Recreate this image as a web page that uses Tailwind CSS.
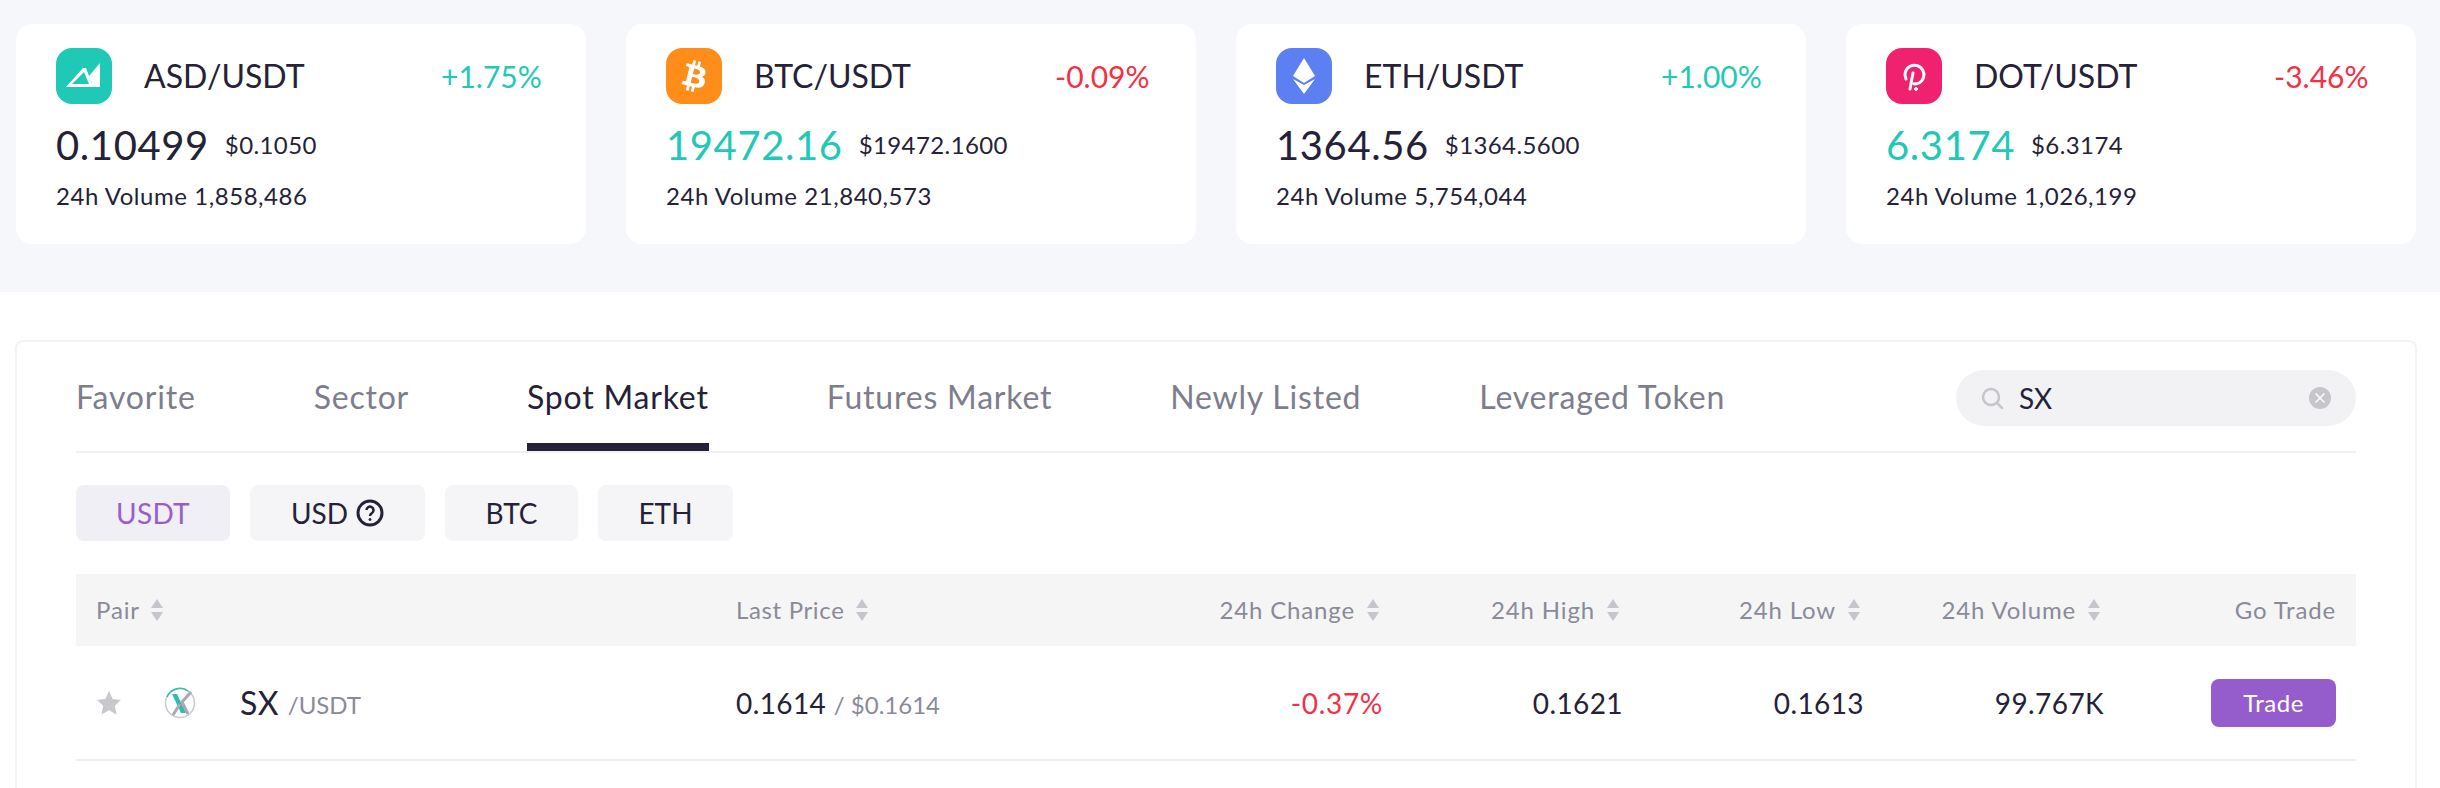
<!DOCTYPE html>
<html lang="en">
<head>
  <meta charset="UTF-8">
  <title>Markets</title>
  <script src="https://cdn.jsdelivr.net/npm/@tailwindcss/browser@4"></script>
</head>
<body class="bg-white text-[#252238] font-[Lato,'Noto_Sans',sans-serif] overflow-hidden h-[788px]">
  <!-- top pairs -->
  <div class="bg-[#f6f7fb] h-[292px] pt-6 pl-4 flex gap-10">
    <div class="w-[570px] h-[220px] bg-white rounded-2xl pt-6 pl-10">
      <div class="flex items-center h-14">
        <div class="w-14 h-14 rounded-2xl bg-[#1fc9b5]">
          <svg viewBox="0 0 56 56" class="w-14 h-14" fill="#fff"><path d="M10 39h34v-3H16l12-12 5 12h3l-6-16h-3z"/><path d="M33 28 44 15v21h-8z"/></svg>
        </div>
        <div class="ml-8 w-[297px] text-[32px]">ASD/USDT</div>
        <div class="text-[30px] text-[#1fc9b5]">+1.75%</div>
      </div>
      <div class="flex items-center mt-[17px] h-12">
        <span class="text-[40px] tracking-[0.6px]">0.10499</span>
        <span class="ml-4 text-[24px] tracking-[0.4px]">$0.1050</span>
      </div>
      <div class="mt-[9px] text-[24px] tracking-[0.55px]">24h Volume 1,858,486</div>
    </div>

    <div class="w-[570px] h-[220px] bg-white rounded-2xl pt-6 pl-10">
      <div class="flex items-center h-14">
        <div class="w-14 h-14 rounded-2xl bg-[#ff8d1a]">
          <svg viewBox="-1.5 -1.5 35 35" class="w-14 h-14" fill="#fff"><path d="M23.189 14.02c.314-2.096-1.283-3.223-3.465-3.975l.708-2.84-1.728-.43-.69 2.765c-.454-.114-.92-.22-1.385-.326l.695-2.783L15.596 6l-.708 2.839c-.376-.086-.746-.17-1.104-.26l.002-.009-2.384-.595-.46 1.846s1.283.294 1.256.312c.7.175.826.638.805 1.006l-.806 3.235c.048.012.11.03.18.057l-.183-.045-1.13 4.532c-.086.212-.303.531-.793.41.018.025-1.256-.313-1.256-.313l-.858 1.978 2.25.561c.418.105.828.215 1.231.318l-.715 2.872 1.727.43.708-2.84c.472.127.93.245 1.378.357l-.706 2.828 1.728.43.715-2.866c2.948.558 5.164.333 6.097-2.333.752-2.146-.037-3.385-1.588-4.192 1.13-.26 1.98-1.003 2.207-2.538zm-3.95 5.538c-.533 2.147-4.148.986-5.32.695l.95-3.805c1.172.293 4.929.872 4.37 3.11zm.535-5.569c-.487 1.953-3.495.96-4.47.717l.86-3.45c.975.243 4.118.696 3.61 2.733z"/></svg>
        </div>
        <div class="ml-8 w-[301px] text-[32px]">BTC/USDT</div>
        <div class="text-[30px] text-[#f52f45]">-0.09%</div>
      </div>
      <div class="flex items-center mt-[17px] h-12">
        <span class="text-[40px] tracking-[0.6px] text-[#1fc9b5]">19472.16</span>
        <span class="ml-4 text-[24px] tracking-[0.4px]">$19472.1600</span>
      </div>
      <div class="mt-[9px] text-[24px] tracking-[0.55px]">24h Volume 21,840,573</div>
    </div>

    <div class="w-[570px] h-[220px] bg-white rounded-2xl pt-6 pl-10">
      <div class="flex items-center h-14">
        <div class="w-14 h-14 rounded-2xl bg-[#5c7ff2]">
          <svg viewBox="0 0 56 56" class="w-14 h-14" fill="#fff"><path d="M28 10 39 28 28 35 17 28z"/><path d="M17 31l11 6 11-6-11 15z"/></svg>
        </div>
        <div class="ml-8 w-[297px] text-[32px]">ETH/USDT</div>
        <div class="text-[30px] text-[#1fc9b5]">+1.00%</div>
      </div>
      <div class="flex items-center mt-[17px] h-12">
        <span class="text-[40px] tracking-[0.6px]">1364.56</span>
        <span class="ml-4 text-[24px] tracking-[0.4px]">$1364.5600</span>
      </div>
      <div class="mt-[9px] text-[24px] tracking-[0.55px]">24h Volume 5,754,044</div>
    </div>

    <div class="w-[570px] h-[220px] bg-white rounded-2xl pt-6 pl-10">
      <div class="flex items-center h-14">
        <div class="w-14 h-14 rounded-2xl bg-[#f0216f]">
          <svg viewBox="0 0 56 56" class="w-14 h-14" fill="none" stroke="#fff" stroke-width="3" stroke-linecap="round"><path d="M20 31a9.500 9.500 0 1 1 13 4c-2 1-3.500 1-5 .8M27 25l-3 16"/><circle cx="30" cy="41" r="1.500" fill="#fff" stroke-width="1"/></svg>
        </div>
        <div class="ml-8 w-[300px] text-[32px]">DOT/USDT</div>
        <div class="text-[30px] text-[#f52f45]">-3.46%</div>
      </div>
      <div class="flex items-center mt-[17px] h-12">
        <span class="text-[40px] tracking-[0.6px] text-[#1fc9b5]">6.3174</span>
        <span class="ml-4 text-[24px] tracking-[0.4px]">$6.3174</span>
      </div>
      <div class="mt-[9px] text-[24px] tracking-[0.55px]">24h Volume 1,026,199</div>
    </div>
  </div>

  <!-- market panel -->
  <div class="mt-[48px] ml-[15px] w-[2402px] h-[448px] border-2 border-b-0 border-[#f3f3f6] rounded-t-lg px-[59px]">
    <div class="flex items-start h-[111px] border-b-2 border-[#f1f1f5]">
      <div class="flex gap-[118px] text-[32px] tracking-[0.8px] text-[#7d7d8c] pt-[31px]">
        <div class="h-[78px]">Favorite</div>
        <div class="h-[78px]">Sector</div>
        <div class="h-[78px] text-[#252238] border-b-[8px] border-[#252238]">Spot Market</div>
        <div class="h-[78px]">Futures Market</div>
        <div class="h-[78px]">Newly Listed</div>
        <div class="h-[78px]">Leveraged Token</div>
      </div>
      <div class="ml-auto mt-[28px] w-[400px] h-14 rounded-full bg-[#f2f2f5] flex items-center px-6">
        <svg viewBox="0 0 24 24" class="w-6 h-6" fill="none" stroke="#c5c5cb" stroke-width="2.500" stroke-linecap="round"><circle cx="11" cy="11" r="8"/><path d="M17 17l5 5"/></svg>
        <span class="ml-[15px] text-[28px]">SX</span>
        <svg viewBox="0 0 24 24" class="ml-auto w-6 h-6"><circle cx="12" cy="12" r="11" fill="#c5c5cb"/><path d="M7.500 7.500l9 9m0-9l-9 9" stroke="#fff" stroke-width="1.500"/></svg>
      </div>
    </div>

    <div class="flex gap-5 mt-8 text-[28px]">
      <div class="w-[154px] h-14 rounded-lg bg-[#f0eff5] text-[#9560cc] tracking-[0.3px] flex items-center justify-center">USDT</div>
      <div class="w-[175px] h-14 rounded-lg bg-[#f5f5f7] flex items-center justify-center gap-2">USD
        <svg viewBox="0 0 28 28" class="w-7 h-7" fill="none" stroke="#252238" stroke-width="3"><circle cx="14" cy="14" r="12"/><path d="M10.500 11a3.500 3.500 0 1 1 5.500 3c-1.500 1-2 1.500-2 3" stroke-width="2.500"/><circle cx="14" cy="20.500" r="1" fill="#252238" stroke-width="1"/></svg>
      </div>
      <div class="w-[133px] h-14 rounded-lg bg-[#f5f5f7] flex items-center justify-center">BTC</div>
      <div class="w-[135px] h-14 rounded-lg bg-[#f5f5f7] flex items-center justify-center">ETH</div>
    </div>

    <div class="mt-[33px] h-[72px] bg-[#f5f5f6] pr-5 grid grid-cols-[660px_400px_247px_240px_241px_240px_232px] items-center text-[24px] tracking-[0.85px] text-[#8a8a98]">
      <div class="pl-5 flex items-center gap-[11px]">Pair
        <svg viewBox="0 0 12 24" class="w-3 h-6" fill="#c5c5cb"><path d="M6 1l6 9H0zM6 23l-6-9h12z"/></svg>
      </div>
      <div class="flex items-center gap-[11px] tracking-[0.65px]">Last Price
        <svg viewBox="0 0 12 24" class="w-3 h-6" fill="#c5c5cb"><path d="M6 1l6 9H0zM6 23l-6-9h12z"/></svg>
      </div>
      <div class="flex items-center justify-end gap-3 pr-1">24h Change
        <svg viewBox="0 0 12 24" class="w-3 h-6" fill="#c5c5cb"><path d="M6 1l6 9H0zM6 23l-6-9h12z"/></svg>
      </div>
      <div class="flex items-center justify-end gap-3 pr-1">24h High
        <svg viewBox="0 0 12 24" class="w-3 h-6" fill="#c5c5cb"><path d="M6 1l6 9H0zM6 23l-6-9h12z"/></svg>
      </div>
      <div class="flex items-center justify-end gap-3 pr-1">24h Low
        <svg viewBox="0 0 12 24" class="w-3 h-6" fill="#c5c5cb"><path d="M6 1l6 9H0zM6 23l-6-9h12z"/></svg>
      </div>
      <div class="flex items-center justify-end gap-3 pr-1">24h Volume
        <svg viewBox="0 0 12 24" class="w-3 h-6" fill="#c5c5cb"><path d="M6 1l6 9H0zM6 23l-6-9h12z"/></svg>
      </div>
      <div class="text-right">Go Trade</div>
    </div>

    <div class="h-[115px] border-b-2 border-[#f1f1f5] pr-5 grid grid-cols-[660px_400px_247px_240px_241px_240px_232px] items-center text-[28px] tracking-[0.4px]">
      <div class="pl-5 flex items-center">
        <svg viewBox="0 0 24 24" class="w-[26px] h-[26px]" fill="#c7c7cc"><path d="M12 1l3.400 7.300 7.600.900-5.600 5.400 1.500 8L12 18.700 5.100 22.600l1.500-8L1 9.200l7.600-.9z"/></svg>
        <svg viewBox="0 0 32 32" class="ml-[42px] w-8 h-8" fill="none"><circle cx="16" cy="16" r="14.500" stroke="#c9c9cf" stroke-width="1.500"/><path d="M3 10A14 14 0 0 1 24 4" stroke="#2fbdae" stroke-width="1.500"/><path d="M8 7l9 19h5L13 7z" fill="#2fbdae"/><path d="M27 5 18 15l6 12M16 17 9 28" stroke="#a9a9b4" stroke-width="3"/></svg>
        <span class="ml-[44px] text-[32px]">SX</span>
        <span class="ml-[9px] text-[24px] tracking-normal text-[#8a8a98] mt-1">/USDT</span>
      </div>
      <div><span>0.1614</span> <span class="text-[24px] tracking-normal text-[#8a8a98]">/ $0.1614</span></div>
      <div class="text-right tracking-[0.7px] text-[#f52f45]">-0.37%</div>
      <div class="text-right">0.1621</div>
      <div class="text-right">0.1613</div>
      <div class="text-right">99.767K</div>
      <div class="flex justify-end">
        <button class="w-[125px] h-12 rounded-lg bg-[#955dcb] text-white text-[24px] tracking-[0.5px]">Trade</button>
      </div>
    </div>
  </div>
</body>
</html>
